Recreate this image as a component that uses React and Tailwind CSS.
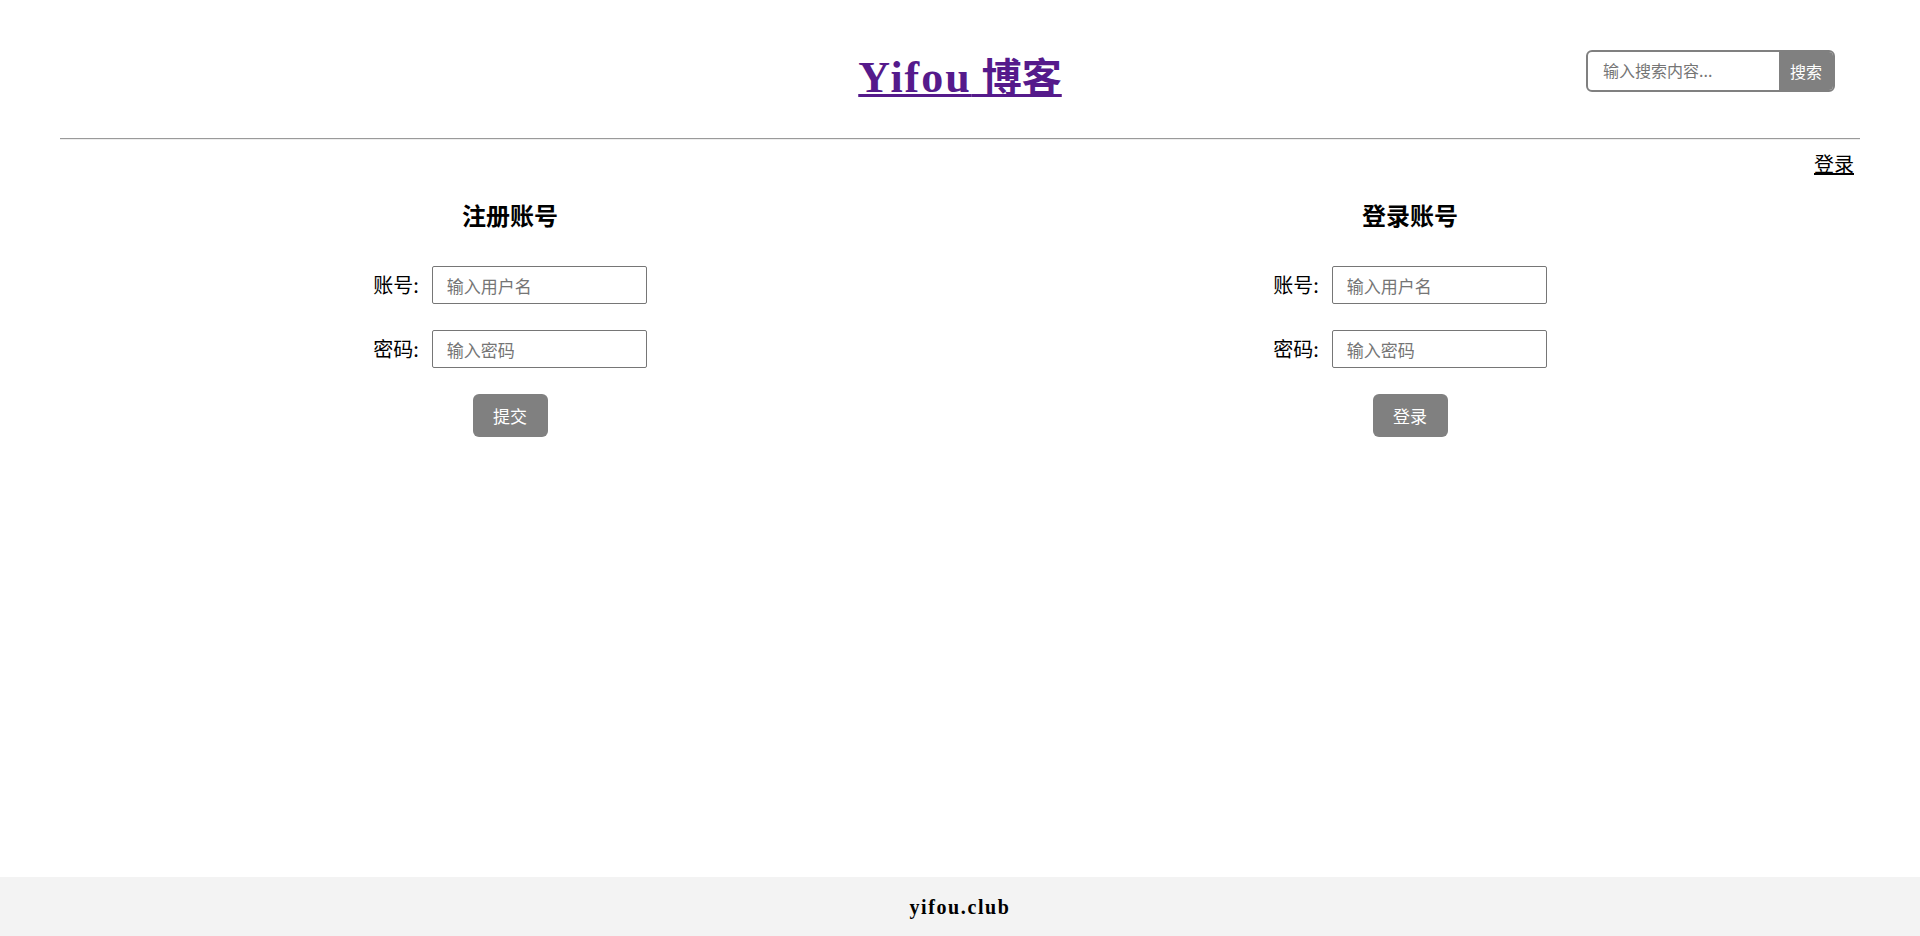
import React from 'react';

const cjk = "font-['Noto_Sans_CJK_SC',sans-serif]";

const Field = ({ label, placeholder, type = 'text' }) => (
  <div className="flex items-center justify-center gap-[13px]">
    <label className="text-[20px] leading-[26px] text-black">{label}</label>
    <input
      type={type}
      placeholder={placeholder}
      className="w-[215px] h-[38px] border border-[#767676] rounded-[2px] pl-[14px] text-[17px] text-black placeholder-[#757575] outline-none bg-white"
    />
  </div>
);

const FormPanel = ({ title, button }) => (
  <div className="flex flex-col items-center">
    <h3 className="text-[24px] leading-[32px] font-bold text-black">{title}</h3>
    <div className="mt-[35px] flex flex-col gap-[26px]">
      <Field label="账号:" placeholder="输入用户名" />
      <Field label="密码:" placeholder="输入密码" type="password" />
    </div>
    <button className="mt-[26px] w-[75px] h-[43px] rounded-[6px] bg-[#808080] text-white text-[17px]">
      {button}
    </button>
  </div>
);

export default function App() {
  return (
    <div className={`min-h-screen flex flex-col bg-white ${cjk}`}>
      {/* header */}
      <div className="px-[60px] pt-[50px] pb-[35px] grid grid-cols-[1fr_auto_1fr] items-start">
        <div />
        <h1 className="mt-[1px] leading-[48px] font-bold text-[40px] text-[#551a8b]">
          <a href="#" className="underline decoration-[3px] underline-offset-[2px] font-['Liberation_Serif','Noto_Sans_CJK_SC',serif]">
            <span className="text-[44px] tracking-[2px]">Yifou</span> 博客
          </a>
        </h1>
        <div className="flex justify-end">
          <div className="mr-[25px] flex w-[249px] h-[42px] border-2 border-[#808080] rounded-[6px] overflow-hidden">
            <input
              type="text"
              placeholder="输入搜索内容..."
              className="flex-1 min-w-0 pl-[15px] pb-[2px] text-[16px] placeholder-[#757575] outline-none"
            />
            <button className="w-[54px] pb-[1px] bg-[#808080] text-white text-[16px]">搜索</button>
          </div>
        </div>
      </div>
      <div className="mx-[60px] border-t border-t-[#9a9a9a] border-b border-b-[#eeeeee]" />

      {/* main */}
      <div className="flex-1 px-[60px]">
        <div className="mt-[11px] pr-[6px] flex justify-end">
          <a href="#" className="text-[20px] leading-[26px] text-black underline">登录</a>
        </div>
        <div className="mt-[22px] grid grid-cols-2">
          <FormPanel title="注册账号" button="提交" />
          <FormPanel title="登录账号" button="登录" />
        </div>
      </div>

      {/* footer */}
      <div className="h-[59px] bg-[#f3f3f3] flex items-center justify-center">
        <span className="font-['Liberation_Serif',serif] font-bold text-[20px] tracking-[1.6px] text-black">yifou.club</span>
      </div>
    </div>
  );
}
